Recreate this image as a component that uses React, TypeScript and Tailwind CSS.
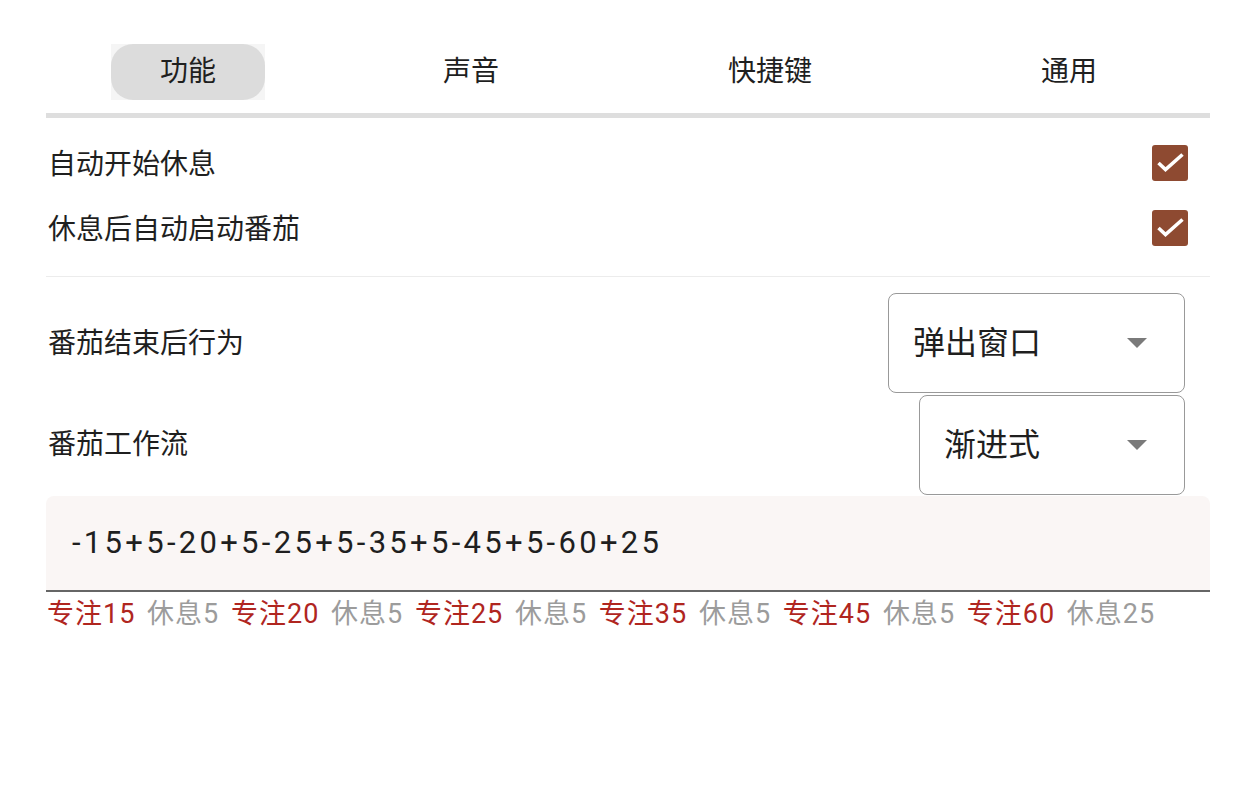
import { useState } from "react";

const tabs = ["功能", "声音", "快捷键", "通用"];

const flow = [
  { focus: 15, rest: 5 },
  { focus: 20, rest: 5 },
  { focus: 25, rest: 5 },
  { focus: 35, rest: 5 },
  { focus: 45, rest: 5 },
  { focus: 60, rest: 25 },
];

function Checkbox({ checked, onChange }: { checked: boolean; onChange: () => void }) {
  return (
    <button
      onClick={onChange}
      className={`w-[36px] h-[36px] rounded-[3px] flex items-center justify-center ${
        checked ? "bg-[#8e4a31]" : "border-2 border-[#777]"
      }`}
    >
      {checked && (
        <svg width="36" height="36" viewBox="0 0 36 36" fill="none">
          <path d="M6.5 18l7 6.5L30.5 9.5" stroke="white" strokeWidth="3.6" />
        </svg>
      )}
    </button>
  );
}

function Select({ value, width }: { value: string; width: string }) {
  return (
    <div
      className={`${width} h-[100px] border-[1.5px] border-[#999] rounded-[8px] flex items-center justify-between pl-[24px] pr-[37px]`}
    >
      <span className="text-[32px] text-[#1f1f1f]">{value}</span>
      <svg width="20" height="10" viewBox="0 0 20 10">
        <path d="M0 0h20L10 10z" fill="#7a7a7a" />
      </svg>
    </div>
  );
}

export default function App() {
  const [active, setActive] = useState(0);
  const [autoBreak, setAutoBreak] = useState(true);
  const [autoStart, setAutoStart] = useState(true);

  return (
    <div
      className="w-[1244px] h-[796px] bg-white text-[#1f1f1f] pt-[44px]"
      style={{ fontFamily: '"Roboto", "Noto Sans CJK SC", sans-serif' }}
    >
      <div className="ml-[46px] w-[1164px]">
        {/* TABS */}
        <div className="grid grid-cols-[284px_282px_316px_282px] h-[56px]">
          {tabs.map((tab, i) => (
            <div key={tab} className="flex justify-center">
              <button
                onClick={() => setActive(i)}
                className={`h-[56px] w-[154px] text-[28px] ${
                  active === i ? "bg-[#f5f5f5]" : ""
                }`}
              >
                <span
                  className={`h-full w-full flex items-center justify-center rounded-[22px] ${
                    active === i ? "bg-[#dcdcdc]" : ""
                  }`}
                >
                  {tab}
                </span>
              </button>
            </div>
          ))}
        </div>
        <div className="h-[5px] bg-[#dedede] mt-[13px]" />

        {/* CHECKBOXES */}
        <div className="pt-[12px]">
          <div className="h-[65px] flex items-center justify-between pl-[2px] pr-[22px]">
            <span className="text-[28px] mt-[5px]">自动开始休息</span>
            <Checkbox checked={autoBreak} onChange={() => setAutoBreak(!autoBreak)} />
          </div>
          <div className="h-[65px] flex items-center justify-between pl-[2px] pr-[22px]">
            <span className="text-[28px] mt-[4px]">休息后自动启动番茄</span>
            <Checkbox checked={autoStart} onChange={() => setAutoStart(!autoStart)} />
          </div>
        </div>
        <div className="h-px bg-[#ececec] mt-[16px]" />

        {/* SELECTS */}
        <div className="pt-[16px]">
          <div className="flex items-center justify-between pl-[2px] pr-[25px]">
            <span className="text-[28px] mt-[2px]">番茄结束后行为</span>
            <Select value="弹出窗口" width="w-[297px]" />
          </div>
          <div className="flex items-center justify-between pl-[2px] pr-[25px] mt-[2px]">
            <span className="text-[28px]">番茄工作流</span>
            <Select value="渐进式" width="w-[266px]" />
          </div>
        </div>

        {/* FLOW INPUT */}
        <div className="mt-px h-[96px] bg-[#faf6f5] rounded-t-[8px] border-b-2 border-[#666] flex items-center pl-[26px]">
          <span className="text-[31px] tracking-[3.3px] text-[#1f1f1f]">
            -15+5-20+5-25+5-35+5-45+5-60+25
          </span>
        </div>
        <div className="pt-[4px] pl-px text-[27px] leading-[36px] tracking-[1px] [word-spacing:4px]">
          {flow.map((f, i) => (
            <span key={i}>
              <span className="text-[#b0261f]">专注{f.focus}</span>{" "}
              <span className="text-[#9c9c9c]">休息{f.rest}</span>
              {i < flow.length - 1 ? " " : ""}
            </span>
          ))}
        </div>
      </div>
    </div>
  );
}
